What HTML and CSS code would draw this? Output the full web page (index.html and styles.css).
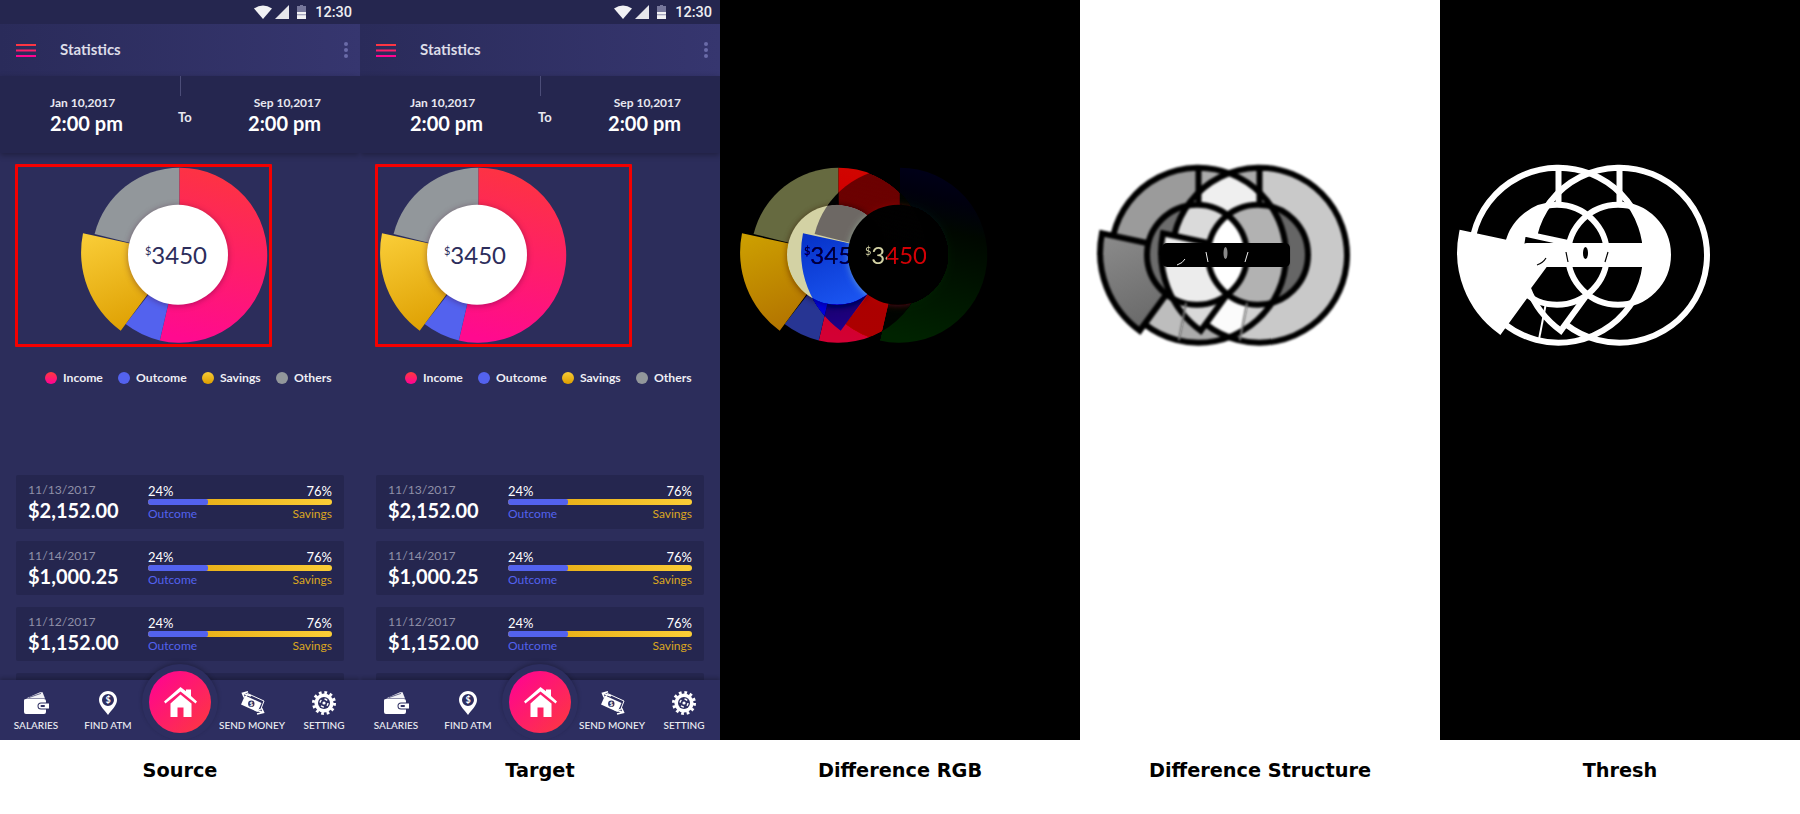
FILE: index.html
```html
<!DOCTYPE html>
<html lang="en">

<head>
  <meta charset="UTF-8">
  <title>Statistics comparison</title>
  <link rel="stylesheet" href="styles.css">
</head>

<body>

  <!-- shared chart shapes, used by every panel -->
  <svg class="defs" width="0" height="0" aria-hidden="true">
    <defs>
      <linearGradient id="grad-income" x1="0.55" y1="0" x2="0.4" y2="1">
        <stop offset="0" stop-color="#fd3440" />
        <stop offset="1" stop-color="#ff0a8f" />
      </linearGradient>
      <linearGradient id="grad-savings" x1="0.2" y1="0" x2="0.6" y2="1">
        <stop offset="0" stop-color="#f8cb35" />
        <stop offset="1" stop-color="#dd9e00" />
      </linearGradient>
      <linearGradient id="grad-burger" x1="0" y1="0" x2="0" y2="1">
        <stop offset="0" stop-color="#fd3a3c" />
        <stop offset="1" stop-color="#ff0097" />
      </linearGradient>
      <linearGradient id="grad-struct-sav" x1="0.2" y1="0" x2="0.6" y2="1">
        <stop offset="0" stop-color="#8a8a8a" />
        <stop offset="1" stop-color="#666" />
      </linearGradient>

      <path id="seg-gray" d="M100.5 88.2 L15.6 67 A87.5 87.5 0 0 1 100.5 .7 Z" />
      <path id="seg-income" d="M100.5 .7 A87.5 87.5 0 1 1 80.8 173.4 L100.5 88.2 Z" />
      <path id="seg-outcome" d="M80.8 173.4 A87.5 87.5 0 0 1 46.6 157.1 L100.5 88.2 Z" />
      <path id="seg-savings" d="M4 66.3 A97 97 0 0 0 41.7 163.7 L99 86 L50 76.3 Z" />
      <circle id="seg-hole" cx="99" cy="87.7" r="50" />
      <path id="seg-edges" d="M15.6 67 A87.5 87.5 0 1 1 46.6 157.1 M50 76.3 L4 66.3 A97 97 0 0 0 41.7 163.7 L70 125 M100.5 .7 V38" />
      <path id="seg-seam" d="M80.8 173.4 L88 136" />

      <g id="donut">
        <use href="#seg-gray" fill="#92979b" />
        <use href="#seg-income" fill="url(#grad-income)" />
        <use href="#seg-outcome" fill="#5362ee" />
        <use href="#seg-savings" fill="url(#grad-savings)" />
        <use href="#seg-hole" class="donut-hole" fill="#fff" />
      </g>

      <clipPath id="src-shape">
        <use href="#seg-gray" transform="translate(79 167)" />
        <use href="#seg-income" transform="translate(79 167)" />
        <use href="#seg-outcome" transform="translate(79 167)" />
        <use href="#seg-savings" transform="translate(79 167)" />
      </clipPath>
      <clipPath id="tgt-shape">
        <use href="#seg-gray" transform="translate(18 167)" />
        <use href="#seg-income" transform="translate(18 167)" />
        <use href="#seg-outcome" transform="translate(18 167)" />
        <use href="#seg-savings" transform="translate(18 167)" />
      </clipPath>
      <clipPath id="src-hole"><use href="#seg-hole" transform="translate(79 167)" /></clipPath>
      <clipPath id="tgt-hole"><use href="#seg-hole" transform="translate(18 167)" /></clipPath>
      <clipPath id="src-rim"><path clip-rule="evenodd" d="M0 0 H360 V740 H0 Z M228 254.7 A50 50 0 1 0 128 254.7 A50 50 0 1 0 228 254.7 Z" /></clipPath>
      <clipPath id="tgt-rim"><path clip-rule="evenodd" d="M0 0 H360 V740 H0 Z M167 254.7 A50 50 0 1 0 67 254.7 A50 50 0 1 0 167 254.7 Z" /></clipPath>
    </defs>
  </svg>

  <div class="board">

    <!-- Source -->
    <section class="panel">
      <div class="phone">
        <div class="status">
          <svg class="status-icon" width="18" height="14" viewBox="0 0 18 14"><path d="M0 3.5 Q9 -2.5 18 3.5 L9 14 Z" fill="#f1f1f4" /></svg>
          <svg class="status-icon" width="14" height="14" viewBox="0 0 14 14"><path d="M14 0 V14 H0 Z" fill="#e6e6ea" /></svg>
          <svg class="status-icon status-battery" width="9" height="14" viewBox="0 0 9 14"><path d="M3 0 H6 V1 H9 V14 H0 V1 H3 Z" fill="#75769a" /><path d="M0 7 H9 V14 H0 Z" fill="#f1f1f4" /><path d="M0 9.4 H9 V10.2 H0 Z" fill="#75769a" /></svg>
          <span class="status-time">12:30</span>
        </div>
        <header class="appbar">
          <svg class="burger" width="20" height="13" viewBox="0 0 20 13"><path d="M0 0 H20 V2 H0 Z M0 5.5 H20 V7.5 H0 Z M0 11 H20 V13 H0 Z" fill="url(#grad-burger)" /></svg>
          <h1 class="appbar-title">Statistics</h1>
          <span class="appbar-dots"><i></i><i></i><i></i></span>
        </header>
        <div class="dates">
          <div class="date-col">
            <div class="date-day">Jan 10,2017</div>
            <div class="date-time">2:00 pm</div>
          </div>
          <div class="date-mid">
            <div class="date-rule"></div>
            <div class="date-to">To</div>
          </div>
          <div class="date-col date-col-right">
            <div class="date-day">Sep 10,2017</div>
            <div class="date-time">2:00 pm</div>
          </div>
        </div>
        <main class="content">
          <div class="chart-box chart-box-source">
            <div class="donut">
              <svg width="200" height="176" viewBox="0 0 200 176"><use href="#donut" /></svg>
              <div class="donut-value"><sup>$</sup>3450</div>
            </div>
          </div>
          <ul class="legend">
            <li><i class="dot dot-income"></i>Income</li>
            <li><i class="dot dot-outcome"></i>Outcome</li>
            <li><i class="dot dot-savings"></i>Savings</li>
            <li><i class="dot dot-others"></i>Others</li>
          </ul>
          <div class="rows">
            <div class="row">
              <div><div class="row-date">11/13/2017</div><div class="row-amount">$2,152.00</div></div>
              <div class="row-bar">
                <div class="row-line"><span>24%</span><span>76%</span></div>
                <div class="bar"><div class="bar-out"></div></div>
                <div class="row-line row-labels"><span class="lab-out">Outcome</span><span class="lab-sav">Savings</span></div>
              </div>
            </div>
            <div class="row">
              <div><div class="row-date">11/14/2017</div><div class="row-amount">$1,000.25</div></div>
              <div class="row-bar">
                <div class="row-line"><span>24%</span><span>76%</span></div>
                <div class="bar"><div class="bar-out"></div></div>
                <div class="row-line row-labels"><span class="lab-out">Outcome</span><span class="lab-sav">Savings</span></div>
              </div>
            </div>
            <div class="row">
              <div><div class="row-date">11/12/2017</div><div class="row-amount">$1,152.00</div></div>
              <div class="row-bar">
                <div class="row-line"><span>24%</span><span>76%</span></div>
                <div class="bar"><div class="bar-out"></div></div>
                <div class="row-line row-labels"><span class="lab-out">Outcome</span><span class="lab-sav">Savings</span></div>
              </div>
            </div>
            <div class="row"></div>
          </div>
        </main>
        <nav class="tabs">
          <div class="fab-bump"></div>
          <div class="fab">
            <svg width="33" height="30" viewBox="0 0 33 30"><path d="M16.5 0 L22 4.2 V2.5 H27 V9 L33 14.5 L31.6 16.4 L16.5 4.6 L1.4 16.4 L0 14.5 Z M16.5 7.5 L27.5 16.5 V30 H19.5 V20.5 H13.5 V30 H6.5 V16.5 Z" fill="#fff" /></svg>
          </div>
          <a class="tab"><svg width="26" height="23" viewBox="0 0 26 23"><path d="M3 7 L17 .8 L19.6 .8 L22 7 Z" fill="#f1f1f5" /><path d="M6 6 L18 1.9" stroke="#2d2e60" stroke-width=".7" /><path d="M1 9 Q1 7.6 3 7.6 H21 Q23 7.6 23 9.5 V11 H18 A3.5 3.5 0 0 0 18 18 H23 V20.5 Q23 22.5 21 22.5 H3 Q1 22.5 1 20.5 Z" fill="#fff" /><path d="M18 12 H26 V17 H18 A2.5 2.5 0 0 1 18 12 Z M18.5 13.5 A1 1 0 1 0 18.5 15.5 H21 A1 1 0 1 0 21 13.5 Z" fill="#fff" fill-rule="evenodd" /></svg><span>SALARIES</span></a>
          <a class="tab"><svg width="18" height="24" viewBox="0 0 18 24"><path d="M9 0 C4 0 0 4 0 9 C0 14.5 6 19.5 9 24 C12 19.5 18 14.5 18 9 C18 4 14 0 9 0 Z M9 3 A6 6 0 1 1 9 15 A6 6 0 1 1 9 3 Z" fill="#fff" fill-rule="evenodd" /><text x="9" y="12.4" class="pin-text">$</text></svg><span>FIND ATM</span></a>
          <a class="tab tab-gap"></a>
          <a class="tab"><svg width="25" height="24" viewBox="0 0 25 24"><path d="M7.5 2.5 L24 10 L20.5 19 L4 11.5 Z" fill="none" stroke="#fff" stroke-width="1" /><path d="M5 4.5 L21.5 12 L17.5 21 L1 13.5 Z" fill="#fff" /><circle cx="11.300" cy="12.700" r="3.200" fill="#2d2e60" /><text x="11.300" y="14.800" class="money-text">$</text><path d="M8 .8 L2.500 2.200 L4.200 6.500 M3 2.200 L11 5" fill="none" stroke="#fff" stroke-width="1.600" /><path d="M17 23 L23.500 21.500 L21.500 17 M23 21.500 L14.500 18.500" fill="none" stroke="#fff" stroke-width="1.600" /></svg><span>SEND MONEY</span></a>
          <a class="tab"><svg width="24" height="24" viewBox="0 0 24 24"><circle cx="12" cy="12" r="10.4" fill="none" stroke="#fff" stroke-width="3.2" stroke-dasharray="2.7 2.75" /><circle cx="12" cy="12" r="9.6" fill="#fff" /><circle cx="12" cy="12" r="6" fill="#2d2e60" /><circle cx="12" cy="12" r="4" fill="none" stroke="#fff" stroke-width="1.4" stroke-dasharray="3 3.3" /><circle cx="12" cy="12" r="1.6" fill="#fff" /></svg><span>SETTING</span></a>
        </nav>
      </div>
      <div class="caption">Source</div>
    </section>

    <!-- Target -->
    <section class="panel">
      <div class="phone">
        <div class="status">
          <svg class="status-icon" width="18" height="14" viewBox="0 0 18 14"><path d="M0 3.5 Q9 -2.5 18 3.5 L9 14 Z" fill="#f1f1f4" /></svg>
          <svg class="status-icon" width="14" height="14" viewBox="0 0 14 14"><path d="M14 0 V14 H0 Z" fill="#e6e6ea" /></svg>
          <svg class="status-icon status-battery" width="9" height="14" viewBox="0 0 9 14"><path d="M3 0 H6 V1 H9 V14 H0 V1 H3 Z" fill="#75769a" /><path d="M0 7 H9 V14 H0 Z" fill="#f1f1f4" /><path d="M0 9.4 H9 V10.2 H0 Z" fill="#75769a" /></svg>
          <span class="status-time">12:30</span>
        </div>
        <header class="appbar">
          <svg class="burger" width="20" height="13" viewBox="0 0 20 13"><path d="M0 0 H20 V2 H0 Z M0 5.5 H20 V7.5 H0 Z M0 11 H20 V13 H0 Z" fill="url(#grad-burger)" /></svg>
          <h1 class="appbar-title">Statistics</h1>
          <span class="appbar-dots"><i></i><i></i><i></i></span>
        </header>
        <div class="dates">
          <div class="date-col">
            <div class="date-day">Jan 10,2017</div>
            <div class="date-time">2:00 pm</div>
          </div>
          <div class="date-mid">
            <div class="date-rule"></div>
            <div class="date-to">To</div>
          </div>
          <div class="date-col date-col-right">
            <div class="date-day">Sep 10,2017</div>
            <div class="date-time">2:00 pm</div>
          </div>
        </div>
        <main class="content">
          <div class="chart-box">
            <div class="donut">
              <svg width="200" height="176" viewBox="0 0 200 176"><use href="#donut" /></svg>
              <div class="donut-value"><sup>$</sup>3450</div>
            </div>
          </div>
          <ul class="legend">
            <li><i class="dot dot-income"></i>Income</li>
            <li><i class="dot dot-outcome"></i>Outcome</li>
            <li><i class="dot dot-savings"></i>Savings</li>
            <li><i class="dot dot-others"></i>Others</li>
          </ul>
          <div class="rows">
            <div class="row">
              <div><div class="row-date">11/13/2017</div><div class="row-amount">$2,152.00</div></div>
              <div class="row-bar">
                <div class="row-line"><span>24%</span><span>76%</span></div>
                <div class="bar"><div class="bar-out"></div></div>
                <div class="row-line row-labels"><span class="lab-out">Outcome</span><span class="lab-sav">Savings</span></div>
              </div>
            </div>
            <div class="row">
              <div><div class="row-date">11/14/2017</div><div class="row-amount">$1,000.25</div></div>
              <div class="row-bar">
                <div class="row-line"><span>24%</span><span>76%</span></div>
                <div class="bar"><div class="bar-out"></div></div>
                <div class="row-line row-labels"><span class="lab-out">Outcome</span><span class="lab-sav">Savings</span></div>
              </div>
            </div>
            <div class="row">
              <div><div class="row-date">11/12/2017</div><div class="row-amount">$1,152.00</div></div>
              <div class="row-bar">
                <div class="row-line"><span>24%</span><span>76%</span></div>
                <div class="bar"><div class="bar-out"></div></div>
                <div class="row-line row-labels"><span class="lab-out">Outcome</span><span class="lab-sav">Savings</span></div>
              </div>
            </div>
            <div class="row"></div>
          </div>
        </main>
        <nav class="tabs">
          <div class="fab-bump"></div>
          <div class="fab">
            <svg width="33" height="30" viewBox="0 0 33 30"><path d="M16.5 0 L22 4.2 V2.5 H27 V9 L33 14.5 L31.6 16.4 L16.5 4.6 L1.4 16.4 L0 14.5 Z M16.5 7.5 L27.5 16.5 V30 H19.5 V20.5 H13.5 V30 H6.5 V16.5 Z" fill="#fff" /></svg>
          </div>
          <a class="tab"><svg width="26" height="23" viewBox="0 0 26 23"><path d="M3 7 L17 .8 L19.6 .8 L22 7 Z" fill="#f1f1f5" /><path d="M6 6 L18 1.9" stroke="#2d2e60" stroke-width=".7" /><path d="M1 9 Q1 7.6 3 7.6 H21 Q23 7.6 23 9.5 V11 H18 A3.5 3.5 0 0 0 18 18 H23 V20.5 Q23 22.5 21 22.5 H3 Q1 22.5 1 20.5 Z" fill="#fff" /><path d="M18 12 H26 V17 H18 A2.5 2.5 0 0 1 18 12 Z M18.5 13.5 A1 1 0 1 0 18.5 15.5 H21 A1 1 0 1 0 21 13.5 Z" fill="#fff" fill-rule="evenodd" /></svg><span>SALARIES</span></a>
          <a class="tab"><svg width="18" height="24" viewBox="0 0 18 24"><path d="M9 0 C4 0 0 4 0 9 C0 14.5 6 19.5 9 24 C12 19.5 18 14.5 18 9 C18 4 14 0 9 0 Z M9 3 A6 6 0 1 1 9 15 A6 6 0 1 1 9 3 Z" fill="#fff" fill-rule="evenodd" /><text x="9" y="12.4" class="pin-text">$</text></svg><span>FIND ATM</span></a>
          <a class="tab tab-gap"></a>
          <a class="tab"><svg width="25" height="24" viewBox="0 0 25 24"><path d="M7.5 2.5 L24 10 L20.5 19 L4 11.5 Z" fill="none" stroke="#fff" stroke-width="1" /><path d="M5 4.5 L21.5 12 L17.5 21 L1 13.5 Z" fill="#fff" /><circle cx="11.300" cy="12.700" r="3.200" fill="#2d2e60" /><text x="11.300" y="14.800" class="money-text">$</text><path d="M8 .8 L2.500 2.200 L4.200 6.500 M3 2.200 L11 5" fill="none" stroke="#fff" stroke-width="1.600" /><path d="M17 23 L23.500 21.500 L21.500 17 M23 21.500 L14.500 18.500" fill="none" stroke="#fff" stroke-width="1.600" /></svg><span>SEND MONEY</span></a>
          <a class="tab"><svg width="24" height="24" viewBox="0 0 24 24"><circle cx="12" cy="12" r="10.4" fill="none" stroke="#fff" stroke-width="3.2" stroke-dasharray="2.7 2.75" /><circle cx="12" cy="12" r="9.6" fill="#fff" /><circle cx="12" cy="12" r="6" fill="#2d2e60" /><circle cx="12" cy="12" r="4" fill="none" stroke="#fff" stroke-width="1.4" stroke-dasharray="3 3.3" /><circle cx="12" cy="12" r="1.6" fill="#fff" /></svg><span>SETTING</span></a>
        </nav>
      </div>
      <div class="caption">Target</div>
    </section>

    <!-- Difference RGB: target minus source, clipped at zero -->
    <section class="panel">
      <div class="canvas canvas-rgb">
        <div class="diff-layer">
          <div class="donut">
            <svg width="200" height="176" viewBox="0 0 200 176"><use href="#donut" /></svg>
            <div class="donut-value"><sup>$</sup>3450</div>
          </div>
        </div>
        <div class="diff-layer diff-layer-source">
          <div class="donut">
            <svg width="200" height="176" viewBox="0 0 200 176"><use href="#donut" /></svg>
            <div class="donut-value"><sup>$</sup>3450</div>
          </div>
        </div>
        <div class="diff-layer diff-layer-minus">
          <div class="donut">
            <svg width="200" height="176" viewBox="0 0 200 176"><use href="#donut" /></svg>
            <div class="donut-value"><sup>$</sup>3450</div>
          </div>
        </div>
      </div>
      <div class="caption">Difference RGB</div>
    </section>

    <!-- Difference Structure -->
    <section class="panel">
      <div class="canvas canvas-struct">
        <svg width="360" height="740" viewBox="0 0 360 740">
          <g transform="translate(79 167)">
            <use href="#seg-gray" fill="#ababab" />
            <use href="#seg-income" fill="#c9c9c9" />
            <use href="#seg-outcome" fill="#c0c0c0" />
            <use href="#seg-savings" fill="#b5b5b5" />
          </g>
          <g transform="translate(18 167)">
            <use href="#seg-gray" fill="#9b9b9b" />
            <use href="#seg-income" fill="#ababab" />
            <use href="#seg-outcome" fill="#bdbdbd" />
            <use href="#seg-savings" fill="url(#grad-struct-sav)" />
          </g>
          <g clip-path="url(#tgt-shape)">
            <g transform="translate(79 167)">
              <use href="#seg-gray" fill="#efefef" />
              <use href="#seg-income" fill="#d0d0d0" />
              <use href="#seg-outcome" fill="#fbfbfb" />
              <use href="#seg-savings" fill="#d8d8d8" />
            </g>
          </g>
          <g clip-path="url(#src-hole)">
            <rect width="360" height="740" fill="#666" />
            <g clip-path="url(#tgt-shape)"><rect width="360" height="740" fill="#b2b2b2" /></g>
          </g>
          <g clip-path="url(#tgt-hole)">
            <rect width="360" height="740" fill="#6c6c6c" />
            <g clip-path="url(#src-shape)">
              <g transform="translate(79 167)">
                <use href="#seg-gray" fill="#dadada" />
                <use href="#seg-income" fill="#eee" />
                <use href="#seg-outcome" fill="#f8f8f8" />
                <use href="#seg-savings" fill="#ececec" />
              </g>
            </g>
            <g clip-path="url(#src-hole)"><rect width="360" height="740" fill="#fff" /></g>
          </g>
          <g class="edge-lines">
            <g clip-path="url(#src-rim)"><use href="#seg-edges" transform="translate(79 167)" /></g>
            <g clip-path="url(#tgt-rim)"><use href="#seg-edges" transform="translate(18 167)" /></g>
            <use href="#seg-hole" transform="translate(79 167)" />
            <use href="#seg-hole" transform="translate(18 167)" />
            <use href="#seg-seam" class="edge-thin" transform="translate(79 167)" />
            <use href="#seg-seam" class="edge-thin" transform="translate(18 167)" />
          </g>
          <rect x="82" y="243" width="128" height="24" rx="5" fill="#000" />
          <ellipse cx="145.500" cy="253" rx="2" ry="6" fill="#888" />
          <path d="M97 265 Q103 263 105 259 M126 252 L128 262 M165 262 L168 252" stroke="#eee" stroke-width="1" fill="none" />
        </svg>
      </div>
      <div class="caption">Difference Structure</div>
    </section>

    <!-- Thresh -->
    <section class="panel">
      <div class="canvas canvas-thresh">
        <svg width="360" height="740" viewBox="0 0 360 740">
          <g clip-path="url(#src-hole)">
            <rect width="360" height="740" fill="#fff" />
            <g clip-path="url(#tgt-shape)"><rect width="360" height="740" fill="#000" /></g>
          </g>
          <g clip-path="url(#tgt-hole)">
            <rect width="360" height="740" fill="#fff" />
            <g clip-path="url(#src-shape)"><rect width="360" height="740" fill="#000" /></g>
          </g>
          <use href="#seg-savings" transform="translate(18 167)" fill="#fff" />
          <g class="edge-lines edge-lines-thresh">
            <g clip-path="url(#src-rim)"><use href="#seg-edges" transform="translate(79 167)" /></g>
            <g clip-path="url(#tgt-rim)"><use href="#seg-edges" transform="translate(18 167)" /></g>
            <use href="#seg-hole" transform="translate(79 167)" />
            <use href="#seg-hole" transform="translate(18 167)" />
            <use href="#seg-seam" class="edge-thin" transform="translate(18 167)" />
          </g>
          <rect x="82" y="243" width="128" height="24" rx="5" fill="#fff" />
          <ellipse cx="145.500" cy="253" rx="2.500" ry="6" fill="#000" />
          <path d="M97 265 Q103 263 106 258 M126 252 L128 262 M165 262 L168 252" stroke="#000" stroke-width="1.200" fill="none" />
        </svg>
      </div>
      <div class="caption">Thresh</div>
    </section>

  </div>

</body>

</html>
```

FILE: styles.css
```css
body {
  margin: 0;
  background-color: #fff;
  font-family: Lato, sans-serif;
  color: #fff;
}

.defs {
  display: block;
  height: 0;
}

.board {
  display: grid;
  grid-template-columns: repeat(5, 360px);
  width: 1800px;
  height: 814px;
  overflow: hidden;
}

.panel {
  display: flex;
  flex-direction: column;
}

.caption {
  height: 74px;
  line-height: 61px;
  text-align: center;
  font-family: "DejaVu Sans", sans-serif;
  font-size: 19.3px;
  font-weight: bold;
  color: #000;
}

/* phone screen */
.phone {
  display: flex;
  flex-direction: column;
  height: 740px;
  overflow: hidden;
  background-color: #2c2d5b;
}

.status {
  display: flex;
  align-items: center;
  justify-content: flex-end;
  height: 24px;
  padding-right: 8px;
  background-color: #25264f;
}

.status-icon {
  margin-right: 3px;
}

.status-battery {
  margin: 0 9px 0 5px;
}

.status-time {
  font-family: Roboto, sans-serif;
  font-size: 14.5px;
  font-weight: 500;
  color: #eeeef2;
}

.appbar {
  display: flex;
  align-items: center;
  height: 52px;
  padding: 0 12px 0 16px;
  background: linear-gradient(90deg, #2a2b5a, #36366f);
}

.appbar-title {
  flex: 1;
  margin: 0 0 2px 24px;
  font-size: 15px;
  font-weight: bold;
  color: #dddde8;
}

.appbar-dots {
  display: flex;
  flex-direction: column;
  gap: 2px;
}

.appbar-dots i {
  width: 4px;
  height: 4px;
  border-radius: 50%;
  background-color: #6a6ba8;
}

.dates {
  display: flex;
  height: 77px;
  padding-right: 39px;
  background-color: #25264f;
  box-shadow: 0 2px 6px rgba(0, 0, 0, 0.3);
}

.date-col {
  width: 128px;
  padding: 20px 0 0 50px;
}

.date-col-right {
  flex: 1;
  padding-left: 0;
  text-align: right;
}

.date-mid {
  width: 18px;
}

.date-rule {
  width: 1px;
  height: 20px;
  margin-left: 2px;
  background-color: #4c4d78;
}

.date-to {
  margin-top: 13px;
  font-size: 13px;
  font-weight: bold;
  line-height: 16px;
  color: #e8e8f0;
}

.date-day {
  font-size: 12px;
  font-weight: bold;
  line-height: 14px;
  color: #e8e8f0;
}

.date-time {
  font-size: 20px;
  font-weight: bold;
  line-height: 27px;
}

.content {
  flex: 1;
  min-height: 0;
  overflow: hidden;
}

/* chart */
.chart-box {
  box-sizing: border-box;
  display: flex;
  width: 257px;
  height: 183px;
  margin: 11px 0 0 15px;
  border: 3px solid #f40000;
  border-radius: 1px;
}

.chart-box-source {
  padding-left: 61px;
}

.donut {
  position: relative;
  width: 200px;
  height: 176px;
}

.donut svg {
  display: block;
  overflow: visible;
}

.donut-hole {
  filter: drop-shadow(0 1px 3px rgba(60, 0, 40, 0.4));
}

.donut-value {
  position: absolute;
  left: 44px;
  top: 71px;
  width: 106px;
  text-align: center;
  font-size: 24px;
  line-height: 34px;
  color: #2c2d5b;
}

.donut-value sup {
  font-size: 11px;
  line-height: 0;
}

.legend {
  display: flex;
  gap: 15.2px;
  margin: 24px 0 0;
  padding: 0 0 0 45px;
  list-style: none;
  font-size: 12.2px;
  font-weight: bold;
  line-height: 14px;
  color: #eeeef4;
}

.legend li {
  display: flex;
  align-items: center;
}

.dot {
  width: 12px;
  height: 12px;
  margin-right: 6px;
  border-radius: 50%;
}

.dot-income {
  background: linear-gradient(#fd3a3c, #ff0097);
}

.dot-outcome {
  background-color: #5362ee;
}

.dot-savings {
  background: linear-gradient(#f8cb35, #dd9e00);
}

.dot-others {
  background-color: #92979b;
}

/* rows */
.rows {
  margin: 90px 16px 0;
}

.row {
  display: grid;
  grid-template-columns: 120px 1fr;
  align-items: center;
  height: 54px;
  margin-bottom: 12px;
  padding: 0 12px;
  border-radius: 2px;
  background-color: #25264f;
}

.row-date {
  font-size: 12.2px;
  line-height: 16px;
  color: #8f90a8;
}

.row-amount {
  font-size: 20px;
  font-weight: bold;
  line-height: 24px;
}

.row-line {
  display: flex;
  justify-content: space-between;
  font-size: 13px;
  line-height: 15px;
}

.row-labels {
  font-size: 12px;
}

.bar {
  height: 6px;
  margin: 0 0 1px;
  border-radius: 3px;
  background: linear-gradient(90deg, #e2a50d, #fbcd36);
}

.bar-out {
  width: 60px;
  height: 6px;
  border-radius: 3px 2px 2px 3px;
  background-color: #5362ee;
}

.lab-out {
  color: #5362ee;
}

.lab-sav {
  color: #dba71f;
}

/* bottom bar */
.tabs {
  position: relative;
  display: grid;
  grid-template-columns: repeat(5, 72px);
  height: 60px;
  background-color: #2d2e60;
  box-shadow: 0 -2px 4px rgba(0, 0, 0, 0.22);
}

.fab-bump {
  position: absolute;
  left: 142px;
  top: -16px;
  width: 76px;
  height: 76px;
  border-radius: 50%;
  background-color: #2d2e60;
  box-shadow: 0 -2px 4px rgba(0, 0, 0, 0.22);
}

.fab {
  position: absolute;
  z-index: 1;
  left: 149px;
  top: -9px;
  display: flex;
  align-items: center;
  justify-content: center;
  width: 62px;
  height: 62px;
  border-radius: 50%;
  background: linear-gradient(135deg, #ff0097, #fd3a3c);
}

.tab {
  position: relative;
  display: flex;
  flex-direction: column;
  align-items: center;
  height: 60px;
  padding-top: 11px;
  box-sizing: border-box;
}

.tab svg {
  height: 24px;
}

.tab span {
  margin-top: 4px;
  font-size: 10px;
  font-weight: 500;
  line-height: 13px;
  white-space: nowrap;
  color: #eeeef4;
}

.pin-text {
  font-family: Lato, sans-serif;
  font-size: 9px;
  font-weight: bold;
  text-anchor: middle;
  fill: #fff;
}

.money-text {
  font-family: Lato, sans-serif;
  font-size: 6px;
  font-weight: bold;
  text-anchor: middle;
  fill: #fff;
}

/* comparison panels */
.canvas {
  position: relative;
  width: 360px;
  height: 740px;
  overflow: hidden;
}

.canvas svg {
  display: block;
}

.canvas-rgb {
  isolation: isolate;
  background-color: #000;
}

.diff-layer {
  position: absolute;
  left: 18px;
  top: 167px;
  width: 251px;
  height: 177px;
  background-color: #2c2d5b;
}

.diff-layer-source {
  mix-blend-mode: darken;
}

.diff-layer-source .donut {
  margin-left: 61px;
}

.diff-layer-minus {
  mix-blend-mode: difference;
}

.canvas-struct {
  background-color: #fff;
}

.canvas-thresh {
  background-color: #000;
}

.edge-lines {
  fill: none;
  stroke: #000;
  stroke-width: 6;
  filter: blur(0.9px);
}

.edge-thin {
  stroke: #777;
  stroke-width: 2;
}

.edge-lines-thresh {
  stroke: #fff;
  stroke-width: 6;
  filter: none;
}

.edge-lines-thresh .edge-thin {
  stroke: #fff;
  stroke-width: 2;
}
```
